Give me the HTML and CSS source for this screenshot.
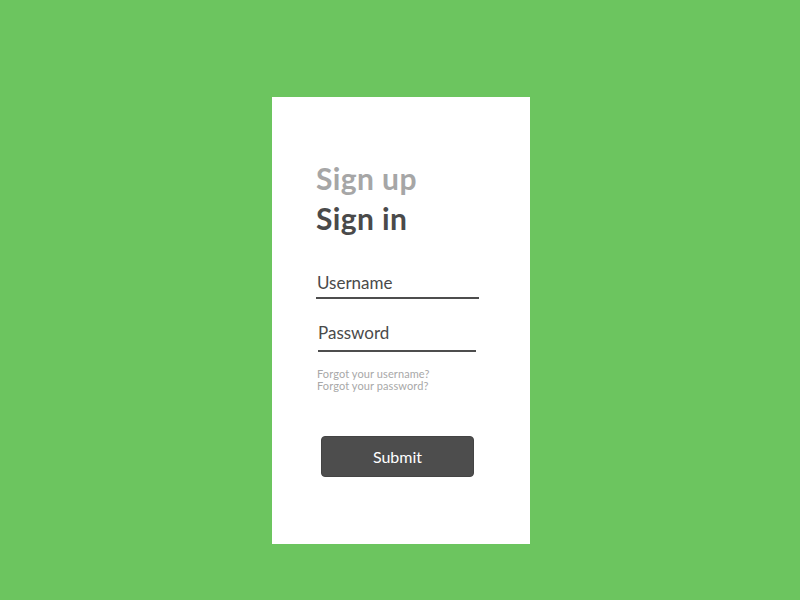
FILE: index.html
```html
<!DOCTYPE html>
<html>
<head>
<meta charset="utf-8">
<link rel="stylesheet" href="styles.css">
</head>
<body>
<div class="stage">
  <div class="card">
    <div class="tabs">
      <div class="tab tab-inactive">Sign up</div>
      <div class="tab tab-active">Sign in</div>
    </div>
    <div class="field field-user">Username</div>
    <div class="field field-pass">Password</div>
    <div class="links">
      <div>Forgot your username?</div>
      <div>Forgot your password?</div>
    </div>
    <button class="submit">Submit</button>
  </div>
</div>
</body>
</html>
```
FILE: styles.css
```css
html, body {
  margin: 0;
  padding: 0;
}
body {
  width: 800px;
  height: 600px;
  background: #6cc55f;
  font-family: "Lato", "Open Sans", sans-serif;
  overflow: hidden;
}
.stage {
  display: flex;
  justify-content: center;
  padding-top: 97px;
  padding-left: 2px;
}
.card {
  width: 258px;
  height: 447px;
  background: #ffffff;
  box-sizing: border-box;
  padding: 61px 0 0 44px;
  display: flex;
  flex-direction: column;
}
.tabs {
  display: flex;
  flex-direction: column;
}
.tab {
  font-size: 30px;
  font-weight: 700;
  line-height: 40px;
  letter-spacing: 0.4px;
}
.tab-inactive {
  color: #a6a6a6;
}
.tab-active {
  color: #4a4a4a;
}
.field {
  font-size: 17px;
  color: #4a4a4a;
  line-height: 22px;
  padding-left: 1px;
  border-bottom: 2px solid #4d4d4d;
}
.field-user {
  margin-top: 34px;
  padding-bottom: 3px;
  width: 162px;
}
.field-pass {
  margin-top: 23px;
  padding-bottom: 6px;
  width: 158px;
  margin-left: 2px;
  padding-left: 0;
}
.links {
  margin-top: 16px;
  padding-left: 1px;
  font-size: 11px;
  line-height: 12px;
  letter-spacing: 0.1px;
  color: #a8a8a8;
}
.submit {
  margin-top: 44px;
  margin-left: 5px;
  width: 153px;
  height: 41px;
  background: #4d4d4d;
  border: 1px solid #444;
  border-radius: 4px;
  color: #ffffff;
  font-family: "Lato", "Open Sans", sans-serif;
  font-size: 16px;
  padding: 0;
}
```
